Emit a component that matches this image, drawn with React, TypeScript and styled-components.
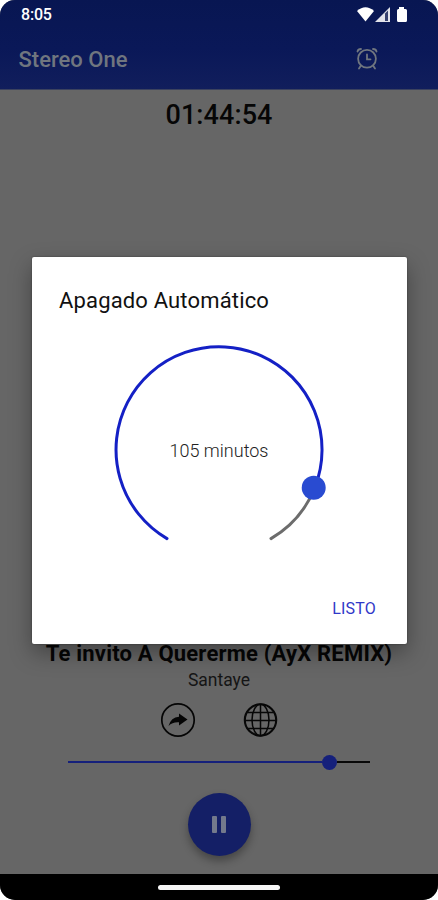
import React from "react";
import styled, { createGlobalStyle } from "styled-components";

const Global = createGlobalStyle`
  * { box-sizing: border-box; }
  html, body { margin: 0; padding: 0; background: #fff; }
  body { font-family: Roboto, "Liberation Sans", sans-serif; }
  button { font: inherit; border: 0; padding: 0; background: none; }
  svg { display: block; }
`;

const Phone = styled.div`
  position: relative;
  display: flex;
  flex-direction: column;
  width: 438px;
  height: 900px;
  border-radius: 15px;
  overflow: hidden;
  background: #666;
`;

const Header = styled.header`
  height: 90px;
  flex: none;
  background: linear-gradient(#081652, #0a1858 55%, #111e5c);
  border-bottom: 1px solid #3b425f;
`;

const StatusBar = styled.div`
  display: flex;
  justify-content: space-between;
  align-items: center;
  height: 29px;
  padding: 0 29px 0 21px;
  color: #fff;
  font-size: 16px;
  font-weight: 500;
  letter-spacing: -0.2px;
`;

const AppBar = styled.div`
  display: flex;
  justify-content: space-between;
  align-items: center;
  height: 60px;
  padding: 0 59px 0 18.5px;
  color: #70767f;
`;

const AppTitle = styled.h1`
  margin: 2px 0 0;
  font-size: 22px;
  line-height: 30px;
  font-weight: 500;
`;

const Player = styled.main`
  flex: 1;
  display: flex;
  flex-direction: column;
  align-items: center;
  padding-top: 8px;
  color: #060606;
`;

const Countdown = styled.div`
  height: 34px;
  line-height: 34px;
  font-size: 27px;
  font-weight: 500;
  letter-spacing: 0.1px;
  white-space: nowrap;
`;

const Song = styled.h2`
  margin: auto 0 0;
  height: 29px;
  line-height: 30px;
  font-size: 22px;
  font-weight: 700;
  letter-spacing: 0.19px;
  white-space: nowrap;
`;

const Artist = styled.div`
  height: 24px;
  line-height: 24px;
  font-size: 17.5px;
  color: #151515;
`;

const Actions = styled.div`
  display: flex;
  gap: 47px;
  margin: 10px 0 0;
  height: 36px;
`;

const Volume = styled.div`
  display: flex;
  align-items: center;
  width: 302px;
  height: 16px;
  margin-top: 16px;
`;

const Track = styled.div<{ $width: number; $color: string }>`
  width: ${(p) => p.$width}px;
  height: 2px;
  background: ${(p) => p.$color};
`;

const Thumb = styled.div`
  width: 15px;
  height: 15px;
  border-radius: 50%;
  background: #15207b;
`;

const PauseButton = styled.button`
  display: flex;
  justify-content: center;
  align-items: center;
  gap: 4px;
  width: 63px;
  height: 63px;
  margin: 23px 0 18px;
  border-radius: 50%;
  background: #141f66;
  box-shadow: 0 5px 9px rgba(0, 0, 0, 0.32);
`;

const PauseBar = styled.span`
  width: 5px;
  height: 17px;
  border-radius: 1px;
  background: #73798c;
`;

const NavBar = styled.footer`
  display: flex;
  justify-content: center;
  align-items: center;
  height: 26px;
  background: #000;
`;

const HomeHandle = styled.div`
  width: 122px;
  height: 5px;
  border-radius: 3px;
  background: #f6f6f6;
`;

const Overlay = styled.div`
  position: absolute;
  inset: 0;
  display: flex;
  justify-content: center;
  align-items: flex-start;
  padding: 257px 0 0 1px;
`;

const Dialog = styled.section`
  display: flex;
  flex-direction: column;
  width: 375px;
  height: 387px;
  padding: 29px 27px 20px;
  border-radius: 2px;
  background: #fff;
  box-shadow: 0 0 2px rgba(0, 0, 0, 0.4), 0 9px 22px rgba(0, 0, 0, 0.34);
`;

const DialogTitle = styled.h3`
  margin: 0;
  height: 30px;
  line-height: 30px;
  font-size: 22px;
  font-weight: 400;
  letter-spacing: 0.16px;
  color: #111;
`;

const Dial = styled.div`
  display: grid;
  place-items: center;
  width: 240px;
  height: 220px;
  margin: 14px 0 0 41px;
  > * { grid-area: 1 / 1; }
`;

const Minutes = styled.span`
  font-size: 18px;
  line-height: 24px;
  color: #222;
  font-weight: 300;
  padding: 22px 2px 0 0;
`;

const DoneButton = styled.button`
  align-self: flex-end;
  margin: auto 4px 0 0;
  height: 31px;
  line-height: 31px;
  font-size: 16px;
  letter-spacing: 0.2px;
  color: #3038c8;
`;

const StatusIcons = () => (
  <svg width="54" height="20" viewBox="356 4 54 20" fill="#fff">
    <path d="M358 10Q366.500 2.500 375 10L366.500 20.500Z" />
    <path d="M391 6V21H376Z" opacity=".88" />
    <path d="M386 12.500L389 9.500V20H386Z" fill="#36406e" />
    <path d="M400 6h5v2h1.500q1.500 0 1.500 1.500v10q0 1.500-1.500 1.500h-7q-1.500 0-1.500-1.500v-10q0-1.500 1.500-1.500h.500z" />
  </svg>
);

const AlarmIcon = () => (
  <svg width="24" height="24" viewBox="0 0 24 24" fill="none" stroke="currentColor" strokeWidth="1.800" strokeLinecap="round">
    <circle cx="12" cy="11.800" r="8.900" />
    <path d="M12 7.500v4.800h3.500M2.500 4.500Q3 2 6 2M21.500 4.500Q21 2 18 2M6 18.500l-2 3M18 18.500l2 3" />
  </svg>
);

const ShareIcon = () => (
  <svg width="36" height="36" viewBox="0 0 36 36">
    <circle cx="18" cy="18" r="16.200" fill="none" stroke="#050505" strokeWidth="1.700" />
    <path d="M19 11.500L27.500 17.500L19 23.500V20.300Q12.500 19.800 8.500 24Q11 15.300 19 14.800Z" fill="#050505" />
  </svg>
);

const GlobeIcon = () => (
  <svg width="36" height="36" viewBox="0 0 36 36" fill="none" stroke="#070707" strokeWidth="1.500">
    <circle cx="17.500" cy="18" r="15.700" strokeWidth="2.100" />
    <ellipse cx="17.500" cy="18" rx="8.500" ry="15.800" />
    <path d="M17.500 2v32M2 18.500h31M4.500 10.500h26M4.500 26.500h26" />
  </svg>
);

const DialArc = () => (
  <svg width="240" height="220" viewBox="100 330 240 220" fill="none" strokeWidth="3" strokeLinecap="round">
    <path d="M315 487.100A103 103 0 0 1 271 538.600" stroke="#6c6c6c" />
    <path d="M167 538.600A103 103 0 1 1 315 487.100" stroke="#1420c5" />
    <circle cx="313.700" cy="487.700" r="12" fill="#294bd1" />
  </svg>
);

export default function App() {
  return (
    <>
      <Global />
      <Phone>
        <Header>
          <StatusBar>
            <span>8:05</span>
            <StatusIcons />
          </StatusBar>
          <AppBar>
            <AppTitle>Stereo One</AppTitle>
            <AlarmIcon />
          </AppBar>
        </Header>
        <Player>
          <Countdown>01:44:54</Countdown>
          <Song>Te invito A Quererme (AyX REMIX)</Song>
          <Artist>Santaye</Artist>
          <Actions>
            <ShareIcon />
            <GlobeIcon />
          </Actions>
          <Volume>
            <Track $width={254} $color="#15207b" />
            <Thumb />
            <Track $width={33} $color="#080808" />
          </Volume>
          <PauseButton aria-label="Pausa">
            <PauseBar />
            <PauseBar />
          </PauseButton>
        </Player>
        <NavBar>
          <HomeHandle />
        </NavBar>
        <Overlay>
          <Dialog role="dialog">
            <DialogTitle>Apagado Automático</DialogTitle>
            <Dial>
              <DialArc />
              <Minutes>105 minutos</Minutes>
            </Dial>
            <DoneButton>LISTO</DoneButton>
          </Dialog>
        </Overlay>
      </Phone>
    </>
  );
}
